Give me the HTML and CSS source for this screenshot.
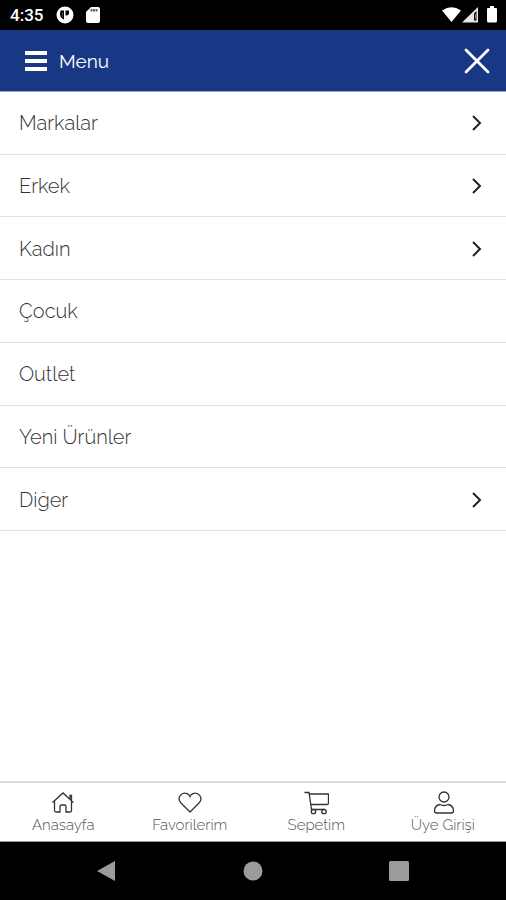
FILE: index.html
```html
<!DOCTYPE html>
<html lang="tr">
<head>
<meta charset="utf-8">
<meta name="viewport" content="width=device-width, initial-scale=1">
<title>Menu</title>
<link rel="stylesheet" href="styles.css">
</head>
<body>
<div class="status">
  <span class="clock">4:35</span>
  <svg class="app" width="18" height="18" viewBox="0 0 18 18"><circle cx="9" cy="9" r="8.500" fill="#fff"/><path d="M4.500 4.500H8V13.500Q4 12 4 8zM9.500 4.500h3.500v3.500q-1 1.500-3.500 1.500z" fill="#000"/><path d="M6.300 6v5.500" stroke="#444"/></svg>
  <svg class="card" width="14" height="16" viewBox="0 0 14 16"><path d="M5 0h7a2 2 0 0 1 2 2v12a2 2 0 0 1-2 2H2a2 2 0 0 1-2-2V5z" fill="#fff"/><path d="M5.500 2v2.500M8 2v2.500M10.500 2v2.500" stroke="#555" stroke-width="1.800"/></svg>
  <svg class="signals" width="56" height="18" viewBox="0 0 56 18"><path d="M0 4.500Q9.500-2 19 4.500L9.500 16z" fill="#fff"/><path d="M20 16.500 36 1v15.500z" fill="#e6e6e6"/><path d="M32 7.500 34.500 5v9.500H32z" fill="#000"/><path d="M33.500 8v5" stroke="#777"/><path d="M46 2h2V0h4v2h2q1 0 1 1v12q0 1.500-1.500 1.500h-7Q45 16.500 45 15V3q0-1 1-1z" fill="#fff"/></svg>
</div>
<header class="bar">
  <svg width="22" height="20" viewBox="0 0 22 20"><path d="M0 2h22M0 10h22M0 18h22" stroke="#fff" stroke-width="4"/></svg>
  <h1>Menu</h1>
  <button class="close" type="button" aria-label="Kapat"><svg width="26" height="26" viewBox="0 0 26 26"><path d="m2 2 22 22M24 2 2 24" stroke="#fff" stroke-width="2.800" stroke-linecap="round"/></svg></button>
</header>
<main>
  <ul class="menu">
    <li><a href="#">Markalar<svg class="chev" viewBox="0 0 10 16"><path d="m1 1 7 7-7 7"/></svg></a></li>
    <li><a href="#">Erkek<svg class="chev" viewBox="0 0 10 16"><path d="m1 1 7 7-7 7"/></svg></a></li>
    <li><a href="#">Kadın<svg class="chev" viewBox="0 0 10 16"><path d="m1 1 7 7-7 7"/></svg></a></li>
    <li><a href="#">Çocuk</a></li>
    <li><a href="#">Outlet</a></li>
    <li><a href="#">Yeni Ürünler</a></li>
    <li><a href="#">Diğer<svg class="chev" viewBox="0 0 10 16"><path d="m1 1 7 7-7 7"/></svg></a></li>
  </ul>
</main>
<nav class="tabs">
  <a href="#"><svg viewBox="0 0 26 24"><path d="M2.500 11.500 13 2l10.500 9.500M20 8V4.500h1.500V10M4.500 10v9.500q0 1.500 1.500 1.500h4v-5.500q0-1.500 1.500-1.500h3q1.500 0 1.500 1.500V21h4q1.500 0 1.500-1.500V10"/></svg><span>Anasayfa</span></a>
  <a href="#"><svg viewBox="0 0 26 24"><path d="M13 21 4 12C-1 6.500 5 1 9.500 2.500Q12 3 13 5.500 14 3 16.500 2.500C21 1 27 6.500 22 12z"/></svg><span>Favorilerim</span></a>
  <a href="#"><svg viewBox="0 0 26 24"><path d="M1.500 1.500H6L8.500 18.500H22M6.500 3H25.500v9q0 1.500-1.500 1.500H8"/><circle cx="10.500" cy="20.500" r="2.200"/><circle cx="21" cy="20.500" r="2.200"/></svg><span>Sepetim</span></a>
  <a href="#"><svg viewBox="0 0 26 24"><circle cx="14" cy="6" r="5"/><path d="M10 13.500q4 2 8 0 5.500 1 5.500 6.500 0 2-2 2h-15q-2 0-2-2 0-5.500 5.500-6.500z"/></svg><span>Üye Girişi</span></a>
</nav>
<footer class="system">
  <button type="button" aria-label="Geri"><svg viewBox="0 0 20 22"><path d="M0 11 18 1v20z"/></svg></button>
  <button type="button" aria-label="Ana ekran"><svg viewBox="0 0 20 22"><circle cx="10" cy="11" r="9.500"/></svg></button>
  <button type="button" aria-label="Son uygulamalar"><svg viewBox="0 0 20 22"><rect y="1" width="20" height="20" rx="1.500"/></svg></button>
</footer>
</body>
</html>
```
FILE: styles.css
```css
* { box-sizing: border-box; }
body {
  margin: 0;
  min-height: 100vh;
  display: flex;
  flex-direction: column;
  background: #fff;
  color: #333;
  font-family: Raleway, Lato, "Open Sans", sans-serif;
}
svg { display: block; flex: none; }
a { color: inherit; text-decoration: none; }
button { border: 0; padding: 0; background: none; }

.status {
  display: flex;
  align-items: center;
  height: 30px;
  padding: 0 8px 0 10px;
  background: #000;
  color: #fff;
}
.clock { font: 500 17px/32px Roboto, sans-serif; }
.app { margin-left: 13px; }
.card { margin-left: 12px; }
.signals { margin-left: auto; }

.bar {
  display: flex;
  align-items: center;
  height: 62px;
  padding: 0 16px 0 25px;
  background: #183785;
  border-bottom: 1px solid #9aa6c8;
  color: #fff;
}
.bar h1 { margin: 0 0 0 12px; font-size: 19px; line-height: 24px; font-weight: 400; }
.close { margin-left: auto; }

main { flex: 1; }
.menu {
  display: grid;
  grid-auto-rows: 1fr;
  min-height: 439px;
  margin: 0;
  padding: 0;
  list-style: none;
}
.menu li { display: grid; border-bottom: 1px solid #e2e2e2; }
.menu a {
  display: flex;
  align-items: center;
  justify-content: space-between;
  padding: 1px 24px 0 19px;
  font-size: 20px;
  line-height: 24px;
  font-weight: 300;
}
.chev { width: 10px; height: 16px; fill: none; stroke: #222; stroke-width: 2; }

.tabs {
  display: grid;
  grid-template-columns: repeat(4, 1fr);
  height: 61px;
  padding-top: 8px;
  border-top: 2px solid #ddd;
  border-bottom: 1px solid #999;
}
.tabs a {
  display: flex;
  flex-direction: column;
  align-items: center;
  font-size: 15px;
  line-height: 20px;
  font-weight: 300;
  color: #555;
}
.tabs svg { width: 26px; height: 24px; fill: none; stroke: #333; stroke-width: 1.300; }

.system {
  display: flex;
  justify-content: center;
  align-items: center;
  gap: 126px;
  height: 58px;
  background: #000;
}
.system svg { width: 20px; height: 22px; fill: #9b9b9b; }
```
